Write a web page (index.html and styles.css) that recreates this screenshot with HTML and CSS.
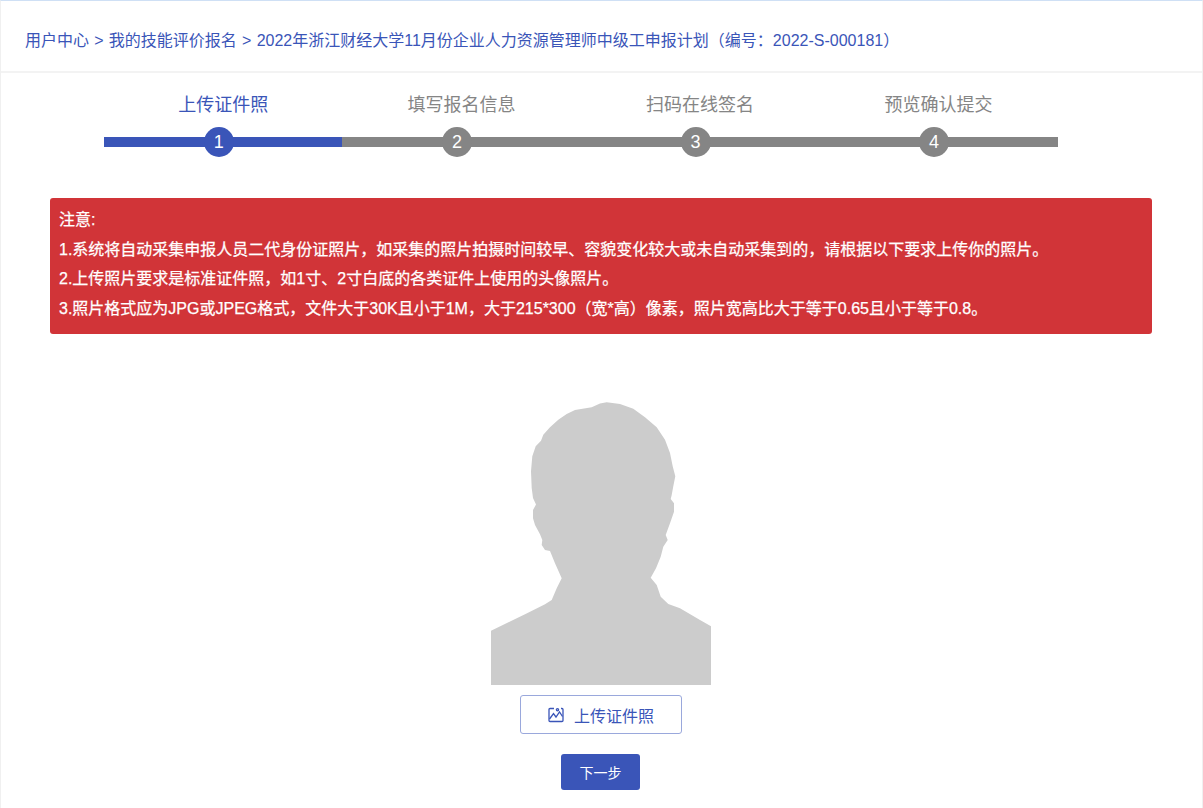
FILE: index.html
```html
<!DOCTYPE html>
<html lang="zh-CN">
<head>
<meta charset="utf-8">
<title>上传证件照</title>
<link rel="stylesheet" href="styles.css">
</head>
<body>
<div class="page">
  <nav class="crumbs">用户中心 &gt; 我的技能评价报名 &gt; 2022年浙江财经大学11月份企业人力资源管理师中级工申报计划（编号：2022-S-000181）</nav>
  <ol class="steps">
    <li class="step active"><span class="step-label">上传证件照</span><span class="step-track"><span class="step-num">1</span></span></li>
    <li class="step"><span class="step-label">填写报名信息</span><span class="step-track"><span class="step-num">2</span></span></li>
    <li class="step"><span class="step-label">扫码在线签名</span><span class="step-track"><span class="step-num">3</span></span></li>
    <li class="step"><span class="step-label">预览确认提交</span><span class="step-track"><span class="step-num">4</span></span></li>
  </ol>
  <div class="notice">
    <p>注意:</p>
    <p>1.系统将自动采集申报人员二代身份证照片，如采集的照片拍摄时间较早、容貌变化较大或未自动采集到的，请根据以下要求上传你的照片。</p>
    <p>2.上传照片要求是标准证件照，如1寸、2寸白底的各类证件上使用的头像照片。</p>
    <p>3.照片格式应为JPG或JPEG格式，文件大于30K且小于1M，大于215*300（宽*高）像素，照片宽高比大于等于0.65且小于等于0.8。</p>
  </div>
  <div class="photo-area">
    <svg class="silhouette" viewBox="491 402 220 283" aria-hidden="true">
      <path d="M491 685V630.7L525 614.3L545 604.3L551.7 600L556.7 588.3L561.7 578.3L555 563.3L550 551L545 550L541.7 545L542.3 540L540 534.3L535 525L533 518.3L533 510L536 504.5L533 498L531.7 488L531 471.3L532.3 456.3L535.7 446.3L541 440.7L543.3 434.7L550 427.3L558.3 419.7L566.7 414L575 410L591.7 407.3L600 403.5L606.7 402.3L620 404L633.3 408.7L645 417.3L656.7 427.3L665 439.7L670 453L672.7 466.3L675.3 476.3L673.3 486.3L671.7 495L670.7 499L674 503.3L674 511.7L670 523.3L665.7 535L667.7 540L663.3 546.7L660.7 556.7L656 568.3L650.7 577.7L656.7 585L660.7 596.7L668.3 604L680 608.3L700 620L711 626.3V685Z"/>
    </svg>
    <button class="upload" type="button">
      <svg class="upload-icon" viewBox="0 0 16 16" aria-hidden="true">
        <path d="M6 1.5H2a1 1 0 0 0-1 1v11a1 1 0 0 0 1 1h12a1 1 0 0 0 1-1v-11a1 1 0 0 0-1-1h-1"/>
        <path d="M1.5 12L5.5 6.5L8 10L11.5 5L14.5 9.5"/>
        <circle cx="9.5" cy="2.8" r="1.1"/>
      </svg>
      上传证件照
    </button>
    <button class="next" type="button">下一步</button>
  </div>
</div>
</body>
</html>
```
FILE: styles.css
```css
* { box-sizing: border-box; }
html, body { margin: 0; padding: 0; background: #fff; }
body {
  font-family: "Liberation Sans", "Noto Sans CJK SC", sans-serif;
  color: #3a55b8;
  overflow: hidden;
}
.page {
  height: 808px;
  border-top: 1px solid #cfe0f5;
  border-left: 1px solid #f0f0f0;
  border-right: 1px solid #f0f0f0;
}
.crumbs {
  height: 72px;
  padding: 0 0 0 24px;
  line-height: 80px;
  font-size: 16px;
  word-spacing: 0.8px;
  border-bottom: 2px solid #f3f3f3;
}
.steps {
  list-style: none;
  margin: 0 0 0 103px;
  padding: 0;
  display: flex;
  width: 953.6px;
  height: 125px;
}
.step {
  flex: 1;
  display: flex;
  flex-direction: column;
  align-items: center;
  padding-top: 19px;
  color: #858585;
}
.step.active { color: #3a55b8; }
.step-label {
  font-size: 18px;
  line-height: 26px;
}
.step-track {
  align-self: stretch;
  height: 10px;
  margin-top: 19px;
  background: #858585;
  display: flex;
  justify-content: center;
  align-items: center;
}
.active .step-track { background: #3a55b8; }
.step-num {
  width: 30px;
  height: 30px;
  margin-right: 9px;
  border-radius: 50%;
  background: #858585;
  color: #fff;
  font-size: 18px;
  line-height: 30px;
  text-align: center;
}
.active .step-num { background: #3a55b8; }
.notice {
  margin-left: 49px;
  width: 1102px;
  height: 136px;
  padding: 7px 9px;
  background: #d13438;
  border-radius: 3px;
  color: #fff;
  font-size: 16px;
  line-height: 29.6px;
  -webkit-text-stroke: 0.25px #fff;
}
.notice p { margin: 0; }
.photo-area {
  display: flex;
  flex-direction: column;
  align-items: center;
  padding-top: 68px;
  margin-right: 1px;
}
.silhouette {
  display: block;
  width: 220px;
  height: 283px;
  fill: #cccccc;
}
.upload {
  margin-top: 10px;
  width: 162px;
  height: 39px;
  background: #fff;
  border: 1px solid #9aa8dc;
  border-radius: 3px;
  color: #3a55b8;
  font: inherit;
  font-size: 16px;
  display: flex;
  align-items: center;
  justify-content: center;
  gap: 10px;
  padding: 0;
}
.upload-icon {
  width: 16px;
  height: 16px;
  fill: none;
  stroke: #3a55b8;
  stroke-width: 1.3;
}
.next {
  margin: 20px 1px 0 0;
  width: 79px;
  height: 36px;
  background: #3a55b8;
  border: 0;
  border-radius: 3px;
  color: #fff;
  font: inherit;
  font-size: 14px;
  padding: 0;
}
```
